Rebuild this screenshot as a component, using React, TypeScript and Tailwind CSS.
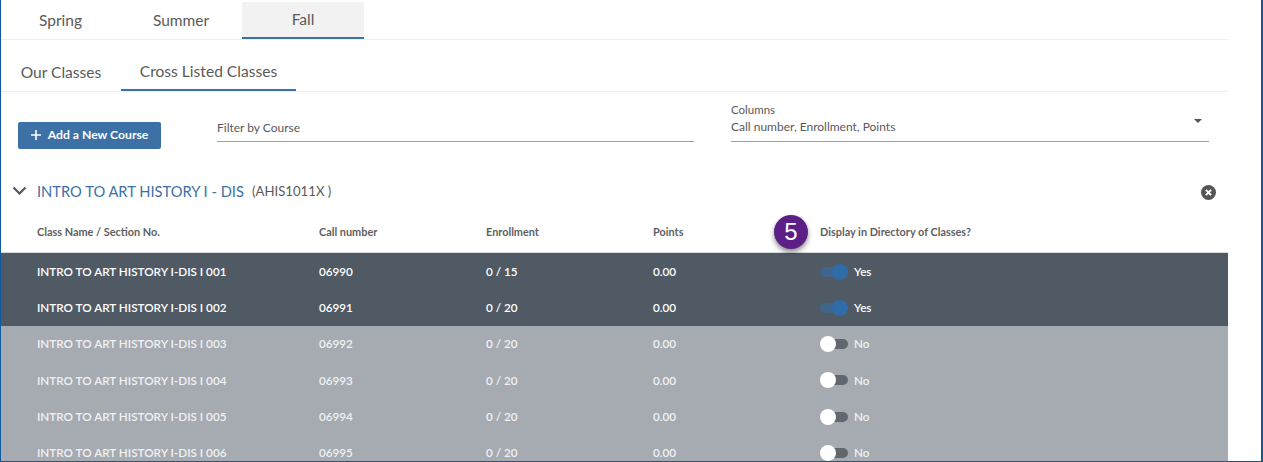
import React from "react";

const font = { fontFamily: '"Lato", "Open Sans", sans-serif' };

function Toggle({ on }: { on: boolean }) {
  return (
    <div className="relative h-[10px] w-[28px] shrink-0">
      <div className={on ? "h-[10px] w-[28px] rounded-full bg-[#40658a]" : "ml-[6px] h-[10px] w-[22px] rounded-full bg-[#62666d]"} />
      <div className={on ? "absolute left-[12px] top-[-3px] h-[16px] w-[16px] rounded-full bg-[#2f6ca8]" : "absolute left-0 top-[-3px] h-[16px] w-[16px] rounded-full bg-white"} />
    </div>
  );
}

function Row({ name, call, enroll, on }: { name: string; call: string; enroll: string; on: boolean }) {
  return (
    <div className={`grid h-[36.3px] shrink-0 grid-cols-[282px_167px_167px_167px_1fr] items-center pl-[36px] text-[11.7px] font-semibold ${on ? "bg-[#505a65] text-white" : "bg-[#a6abb2] text-[#f0f1f3]"}`}>
      <div className="whitespace-nowrap">{name}</div>
      <div>{call}</div>
      <div>{enroll}</div>
      <div>0.00</div>
      <div className="flex items-center gap-[6px]">
        <Toggle on={on} />
        <span>{on ? "Yes" : "No"}</span>
      </div>
    </div>
  );
}

export default function App() {
  const rows = [
    ["INTRO TO ART HISTORY I-DIS I 001", "06990", "0 / 15", true],
    ["INTRO TO ART HISTORY I-DIS I 002", "06991", "0 / 20", true],
    ["INTRO TO ART HISTORY I-DIS I 003", "06992", "0 / 20", false],
    ["INTRO TO ART HISTORY I-DIS I 004", "06993", "0 / 20", false],
    ["INTRO TO ART HISTORY I-DIS I 005", "06994", "0 / 20", false],
    ["INTRO TO ART HISTORY I-DIS I 006", "06995", "0 / 20", false],
  ] as const;
  return (
    <div style={font} className="box-border flex h-[462px] w-[1263px] overflow-hidden border-b border-l border-r-2 border-[#0f5a9e] bg-white text-[#5a5a5a]">
      <div className="flex h-full w-[1227px] shrink-0 flex-col overflow-hidden">
        {/* Term tabs */}
        <div className="flex h-[40px] shrink-0 items-stretch border-b border-[#eeeeee] pt-[2px]">
          <div className="flex w-[119px] items-center justify-center text-[15.5px]">Spring</div>
          <div className="flex w-[122px] items-center justify-center text-[15.5px]">Summer</div>
          <div className="flex w-[122px] items-center justify-center border-b-2 border-[#3d71a6] bg-[#f2f2f2] text-[15.5px]">Fall</div>
        </div>
        {/* Sub tabs */}
        <div className="flex h-[52px] shrink-0 items-stretch border-b border-[#eeeeee]">
          <div className="flex w-[120px] items-center justify-center pt-[15px] text-[15.6px]">Our Classes</div>
          <div className="flex w-[175px] items-center justify-center border-b-2 border-[#3d71a6] pt-[15px] text-[15.6px]">Cross Listed Classes</div>
        </div>
        {/* Toolbar */}
        <div className="flex h-[79px] shrink-0 items-start pl-[17px] pt-[30px]">
          <button className="flex h-[27px] w-[143px] items-center justify-center gap-[6px] rounded-[2px] bg-[#3d71a6] pb-[1px] pr-[1px] text-[12.2px] font-bold text-white">
            <svg width="12" height="12" viewBox="0 0 12 12"><path d="M6 1v10M1 6h10" stroke="#fff" strokeWidth="1.6" /></svg>
            Add a New Course
          </button>
          <div className="ml-[56px] flex h-[20px] w-[477px] items-start border-b border-[#a0a0a0] text-[12px]">
            <span className="mt-[-3px]">Filter by Course</span>
          </div>
          <div className="relative ml-[37px] mt-[-20px] h-[40px] w-[478px] border-b border-[#a0a0a0] text-[12px]">
            <div className="text-[11.5px] leading-[16px]">Columns</div>
            <div className="leading-[18px]">Call number, Enrollment, Points</div>
            <div className="absolute right-[7px] top-[17px] h-0 w-0 border-x-[4px] border-t-[4px] border-x-transparent border-t-[#555555]" />
          </div>
        </div>
        {/* Course heading */}
        <div className="flex h-[40px] shrink-0 items-center pl-[11px]">
          <svg width="15" height="10" viewBox="0 0 15 10"><path d="M1.5 1.5 7.5 7.5 13.5 1.5" fill="none" stroke="#555" strokeWidth="2.2" /></svg>
          <span className="ml-[10px] text-[14.7px] text-[#3d71a6]">INTRO TO ART HISTORY I - DIS</span>
          <span className="ml-[8px] mt-[2px] text-[13.2px]">(AHIS1011X )</span>
          <svg className="ml-auto mr-[12px] mt-[2px]" width="15" height="15" viewBox="0 0 16 16">
            <circle cx="8" cy="8" r="8" fill="#555" />
            <path d="M5.2 5.2l5.6 5.6M10.8 5.2l-5.6 5.6" stroke="#fff" strokeWidth="2.2" />
          </svg>
        </div>
        {/* Table head */}
        <div className="grid h-[42.4px] shrink-0 grid-cols-[282px_167px_167px_167px_1fr] items-center border-b border-[#d5d8db] pl-[36px] text-[10.9px] font-bold text-[#5f5f5f]">
          <div>Class Name / Section No.</div>
          <div>Call number</div>
          <div>Enrollment</div>
          <div>Points</div>
          <div className="relative">
            Display in Directory of Classes?
            <div className="absolute left-[-46px] top-[-9px] flex h-[34px] w-[34px] items-center justify-center rounded-full bg-[#5b1f87] text-[24px] font-normal text-white shadow-[0_3px_5px_rgba(0,0,0,0.45)]" style={{ fontFamily: '"Liberation Sans", sans-serif' }}>
              5
            </div>
          </div>
        </div>
        {rows.map((r) => (
          <Row key={r[0]} name={r[0]} call={r[1]} enroll={r[2]} on={r[3]} />
        ))}
      </div>
    </div>
  );
}
